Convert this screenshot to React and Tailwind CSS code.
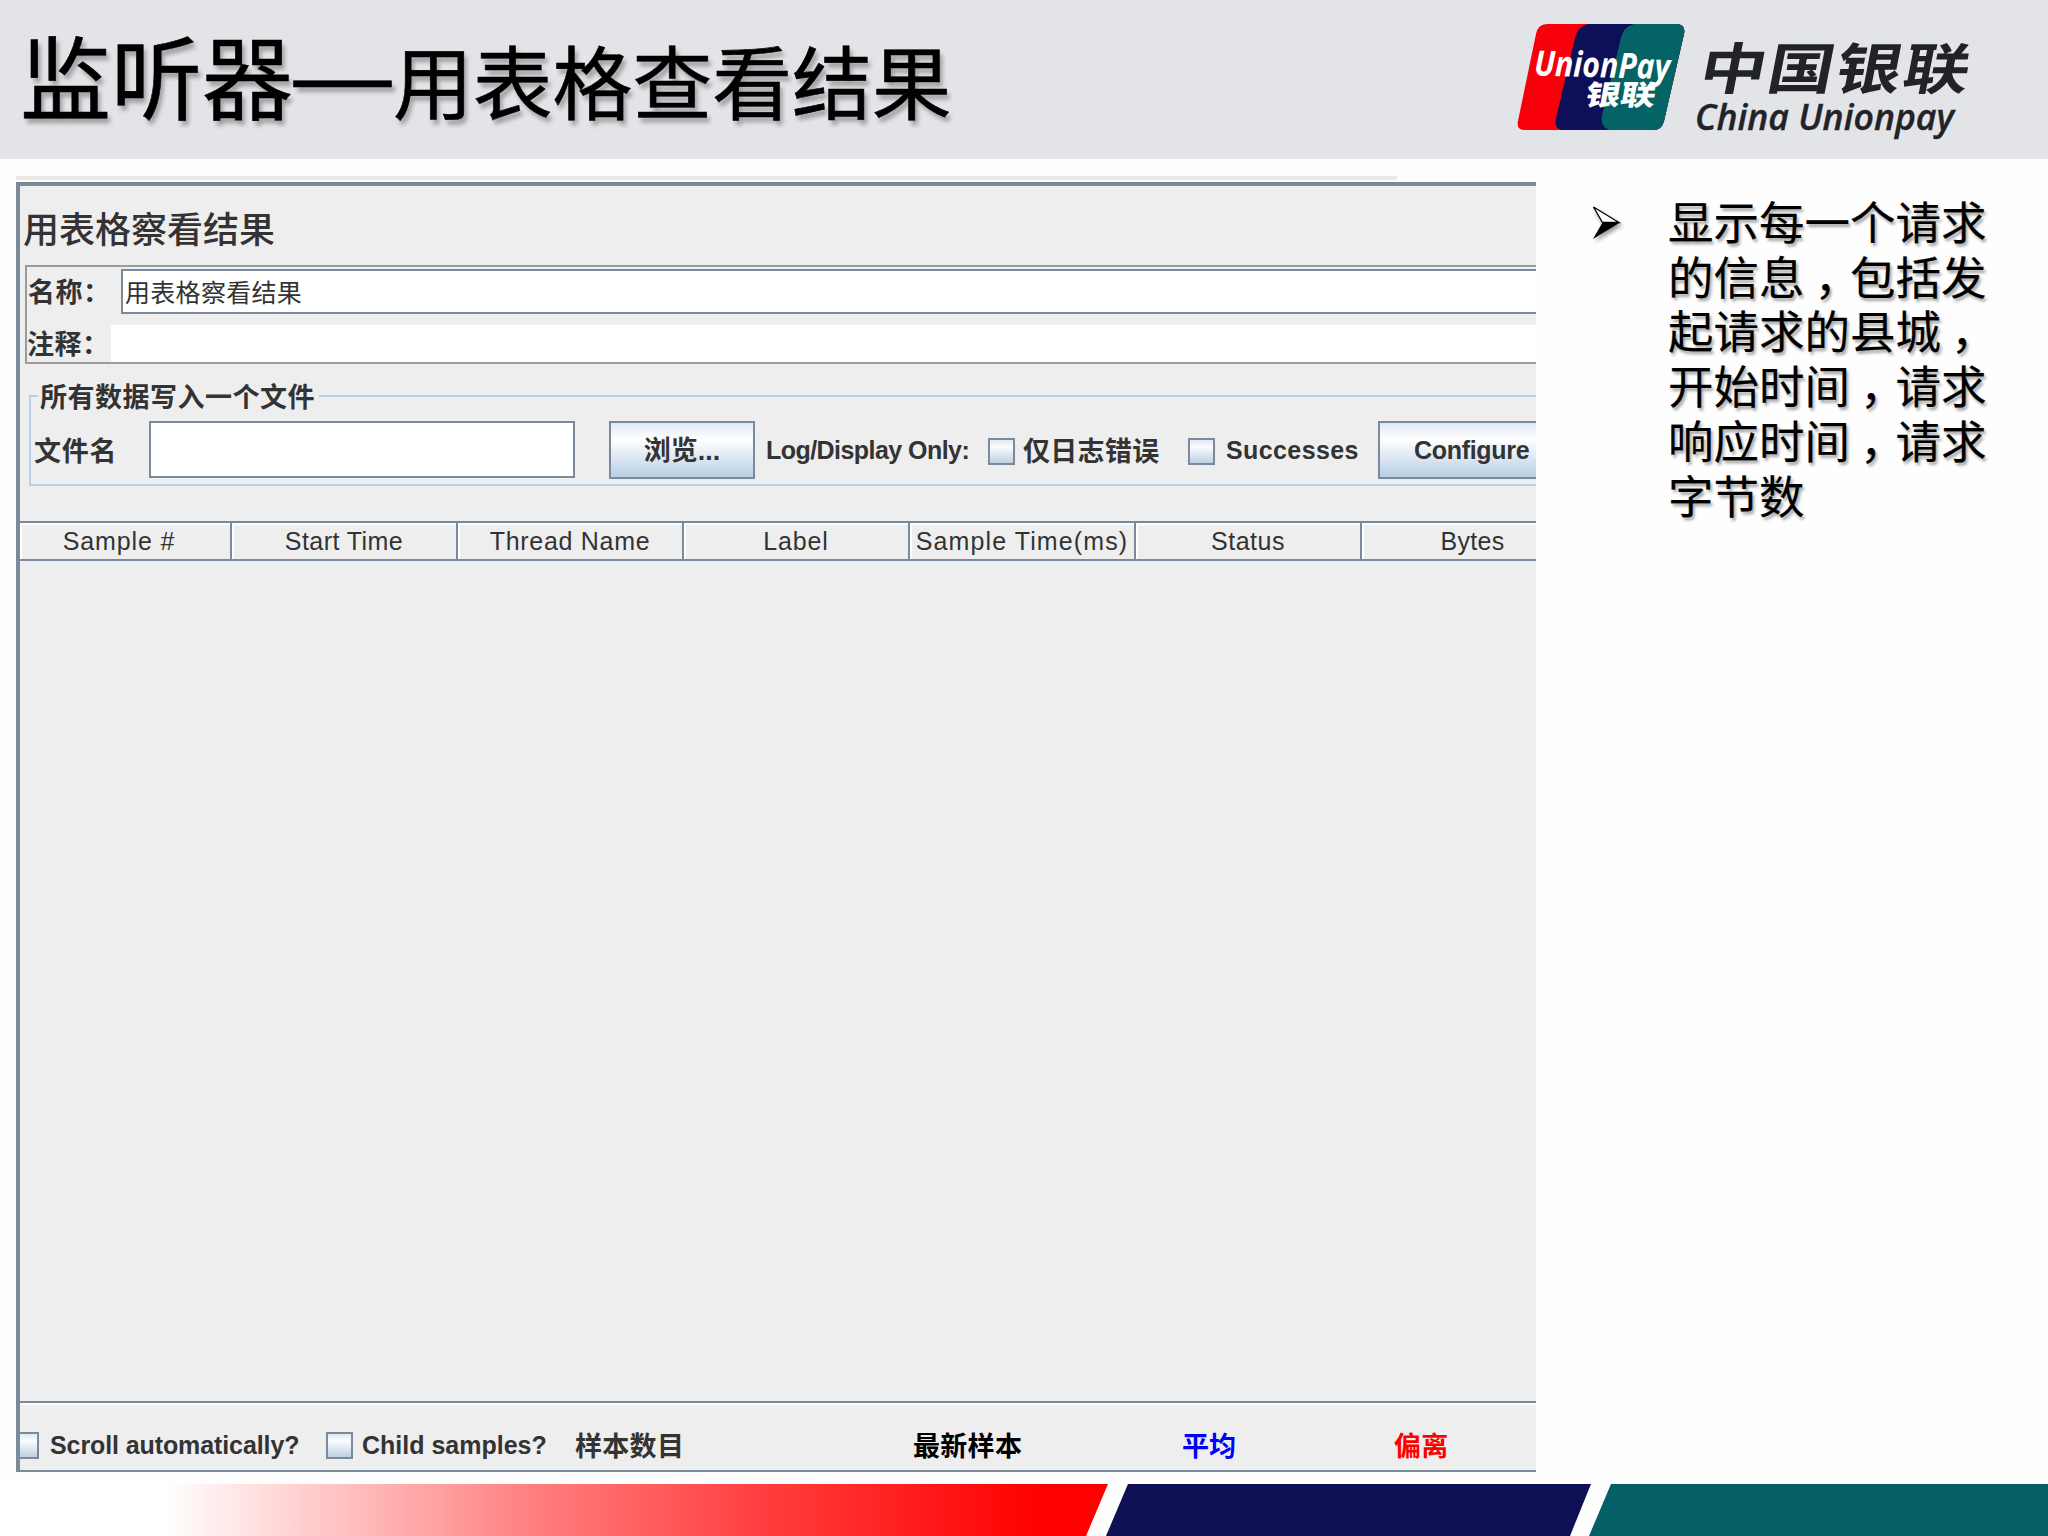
const columns = [
  { name: 'Sample #', cell: 'w-[212px]', text: 'tracking-[0.85px] pr-[12px]' },
  { name: 'Start Time', cell: 'w-[226px]', text: 'tracking-[0.45px]' },
  { name: 'Thread Name', cell: 'w-[226px]', text: 'tracking-[0.7px]' },
  { name: 'Label', cell: 'w-[226px]', text: 'tracking-[0.9px]' },
  { name: 'Sample Time(ms)', cell: 'w-[226px]', text: 'tracking-[1.1px]' },
  { name: 'Status', cell: 'w-[226px]', text: 'tracking-[0.5px]' },
  { name: 'Bytes', cell: 'w-[226px]', text: 'tracking-[0.3px] pr-[3px]' },
];

const paragraph = [
  '显示每一个请求',
  '的信息，包括发',
  '起请求的县城，',
  '开始时间，请求',
  '响应时间，请求',
  '字节数',
];

function CheckBox({ className = '' }) {
  return (
    <span
      className={`h-[27px] w-[27px] shrink-0 border-2 border-[#7a8a99] bg-linear-to-b/srgb from-[#e0e9f4] via-[#fafcfe] via-30% to-[#bfd0e2] ${className}`}
    />
  );
}

function Label({ className = '', children }) {
  return (
    <span className={`block shrink-0 whitespace-nowrap font-bold leading-none text-[#333] ${className}`}>
      {children}
    </span>
  );
}

function Logo() {
  return (
    <svg className="h-[140px] w-[480px]" viewBox="1500 10 480 140">
      <defs>
        <clipPath id="card">
          <path d="M1547 24 H1676 Q1686 24 1684 34 L1664 121 Q1662 130 1653 130 H1525 Q1516 130 1518 121 L1536 34 Q1538 24 1547 24Z" />
        </clipPath>
      </defs>
      <g clipPath="url(#card)">
        <rect x="1510" y="20" width="180" height="115" fill="#f80009" />
        <path d="M1588 24 Q1578 26 1575 38 L1556 118 Q1554 128 1561 130 H1700 V24Z" fill="#0d0f58" />
        <path d="M1634 24 Q1624 26 1621 38 L1602 115 Q1600 127 1609 130 H1700 V24Z" fill="#036365" />
      </g>
      <text x="1534" y="75.5" fontSize="35" fontWeight="700" fontStyle="italic" fill="#fff" textLength="136" lengthAdjust="spacingAndGlyphs" transform="rotate(1.5 1534 75)" className="font-['Open_Sans',sans-serif]">
        UnionPay
      </text>
      <text transform="translate(1584 105) skewX(-10)" fontSize="28" fontWeight="900" fill="#fff" textLength="70" lengthAdjust="spacingAndGlyphs" className="font-['Noto_Sans_CJK_SC',sans-serif]">
        银联
      </text>
      <text transform="translate(1697 88.5) skewX(-11) scale(1.1 0.92)" fontSize="60" letterSpacing="1.6" fontWeight="700" fill="#212327" className="font-['Noto_Sans_CJK_SC',sans-serif]">
        中国银联
      </text>
      <text x="1695" y="130" fontSize="36.5" fontWeight="600" fontStyle="italic" fill="#212327" stroke="#212327" strokeWidth="0.4" textLength="259" lengthAdjust="spacingAndGlyphs" className="font-['Open_Sans',sans-serif]">
        China Unionpay
      </text>
    </svg>
  );
}

function FilePanel() {
  return (
    <section className="ml-[9px] mt-[31px] h-[91px] border-y-2 border-l-2 border-[#b8cfe5]">
      <div className="-mt-[15px] ml-[7px] flex h-[28px] w-[281px] items-center bg-[#eeeeef] pl-[2px] pt-[4px]">
        <Label className="text-[27px] tracking-[0.5px]">所有数据写入一个文件</Label>
      </div>
      <div className="mt-[11px] flex h-[58px] items-center">
        <Label className="w-[118px] pl-[3px] pt-[4px] text-[27px] tracking-[0.7px]">文件名</Label>
        <span className="h-[57px] w-[426px] shrink-0 self-start border-2 border-[#7a8a99] bg-white" />
        <span className="ml-[34px] flex h-[58px] w-[146px] shrink-0 items-center justify-center border-2 border-[#7a8a99] bg-linear-to-b/srgb from-[#dfe8f2] via-white via-30% to-[#b8cfe5]">
          <Label className="pt-[3px] text-[27px]">浏览...</Label>
        </span>
        <Label className="ml-[11px] w-[222px] text-[25px] tracking-[-0.55px]">Log/Display Only:</Label>
        <CheckBox className="mt-[2px]" />
        <Label className="ml-[8px] w-[165px] pt-[4px] text-[27px] tracking-[0.3px]">仅日志错误</Label>
        <CheckBox className="mt-[2px]" />
        <Label className="ml-[11px] w-[152px] text-[25px] tracking-[0.4px]">Successes</Label>
        <span className="flex h-[58px] w-[158px] shrink-0 items-center border-y-2 border-l-2 border-[#7a8a99] bg-linear-to-b/srgb from-[#dfe8f2] via-white via-30% to-[#b8cfe5] pl-[34px]">
          <Label className="text-[25px] tracking-[-0.3px]">Configure</Label>
        </span>
      </div>
    </section>
  );
}

function ResultsPanel() {
  return (
    <div className="w-[1520px] overflow-hidden">
      <div className="h-[4px] w-[1381px] bg-[#ebe8e5]" />
      <div className="mt-[2px] flex h-[1290px] flex-col overflow-hidden border-b-2 border-l-4 border-t-4 border-[#7a8a99] bg-[#eeeeef]">
        <h2 className="flex h-[79px] shrink-0 items-center pl-[3px] pt-[11px] text-[36px] font-medium leading-none text-[#333]">
          用表格察看结果
        </h2>

        <div className="ml-[5px] h-[99px] shrink-0 border-y-2 border-l-2 border-[#9b9b9b]">
          <div className="flex h-[48px] items-center pt-[1px]">
            <Label className="w-[94px] pl-[1px] pt-[4px] text-[27px] tracking-[0.5px]">名称：</Label>
            <div className="flex h-[45px] flex-1 items-center border-y-2 border-l-2 border-[#7a8a99] bg-white pl-[2px] pt-[3px] text-[25px] leading-none tracking-[0.3px] text-[#333]">
              用表格察看结果
            </div>
          </div>
          <div className="flex h-[47px] items-end">
            <Label className="w-[84px] self-center pt-[14px] text-[27px] tracking-[0.5px]">注释：</Label>
            <div className="h-[37px] flex-1 bg-white" />
          </div>
        </div>

        <FilePanel />

        <div className="mt-[35px] flex h-[40px] w-[1568px] shrink-0 border-y-2 border-[#7a8a99]">
          {columns.map((c) => (
            <div
              key={c.name}
              className={`flex h-full shrink-0 items-center justify-center whitespace-nowrap border-r-2 border-r-[#7a8a99] shadow-[inset_2px_2px_0_#fff] text-[25px] leading-none text-[#333] ${c.cell} ${c.text}`}
            >
              {c.name}
            </div>
          ))}
        </div>

        <div className="flex-1" />

        <div className="flex h-[69px] shrink-0 items-center border-t-2 border-[#7a8a99] pt-[21px] pb-[3px] shadow-[inset_0_2px_0_#fff]">
          <CheckBox className="-ml-[8px]" />
          <Label className="ml-[11px] w-[276px] text-[25px] tracking-[-0.1px]">Scroll automatically?</Label>
          <CheckBox />
          <Label className="ml-[9px] w-[213px] text-[25px]">Child samples?</Label>
          <Label className="w-[338px] pt-[3px] text-[27px] tracking-[0.3px]">样本数目</Label>
          <Label className="w-[269px] pt-[3px] text-[27px] tracking-[0.3px] !text-black">最新样本</Label>
          <Label className="w-[212px] pt-[3px] text-[27px] !text-[#0000ff]">平均</Label>
          <Label className="pt-[3px] text-[27px] tracking-[0.3px] !text-[#ff0000]">偏离</Label>
        </div>
      </div>
    </div>
  );
}

export default function App() {
  return (
    <div className="flex h-[1536px] w-[2048px] flex-col overflow-hidden bg-[#fefefe] font-['Liberation_Sans','Noto_Sans_CJK_SC',sans-serif]">
      <header className="flex h-[159px] shrink-0 items-start justify-between bg-[#e3e4e8] pr-[68px] pt-[10px]">
        <h1 className="-mt-[5px] flex h-[136px] items-baseline whitespace-nowrap pl-[20px] font-['Noto_Sans_CJK_SC',sans-serif] font-normal leading-[136px] text-black [-webkit-text-stroke:0.6px_black] [text-shadow:3px_5px_4px_rgba(0,0,0,0.3)]">
          <span className="text-[91px]">监听器</span>
          <span className="relative -top-[1px] left-[6px] w-[100px] origin-center scale-x-[1.22] text-[100px] leading-none">—</span>
          <span className="text-[79.8px]">用表格查看结果</span>
        </h1>
        <Logo />
      </header>

      <main className="flex h-[1325px] shrink-0 pl-[16px] pt-[17px]">
        <ResultsPanel />
        <div className="flex pl-[56px] pt-[17px]">
          <svg className="mt-[12px] h-[36px] w-[76px] drop-shadow-[2px_3px_2px_rgba(0,0,0,0.4)]" viewBox="0 0 76 36">
            <path d="M1.5 2 L27 17.5 L10.5 17.5Z" fill="#fff" stroke="#000" strokeWidth="1.3" />
            <path d="M10.5 17.5 H28 L1 34Z" fill="#000" />
          </svg>
          <div className="whitespace-nowrap font-['Noto_Sans_CJK_SC',sans-serif] text-[45.5px] leading-[54.7px] text-black [-webkit-text-stroke:0.2px_black] [text-shadow:2px_3px_3px_rgba(0,0,0,0.35)]">
            {paragraph.map((line) => (
              <p key={line}>
                {line.split('').map((ch, i) =>
                  ch === '，' ? (
                    <span key={i} className="relative left-[10px]">{ch}</span>
                  ) : (
                    ch
                  ),
                )}
              </p>
            ))}
          </div>
        </div>
      </main>

      <footer className="flex h-[52px] shrink-0">
        <div className="h-full w-[1108px] bg-[linear-gradient(to_right,#fff_165px,#ff8080_530px,#ff4040_755px,#ff0000_1040px)] [clip-path:polygon(0_0,100%_0,1086px_100%,0_100%)]" />
        <div className="-ml-[2px] h-full w-[485px] bg-[#0d1154] [clip-path:polygon(22px_0,100%_0,464px_100%,0_100%)]" />
        <div className="-ml-[2px] h-full flex-1 bg-[#046066] [clip-path:polygon(22px_0,100%_0,100%_100%,0_100%)]" />
      </footer>
    </div>
  );
}
